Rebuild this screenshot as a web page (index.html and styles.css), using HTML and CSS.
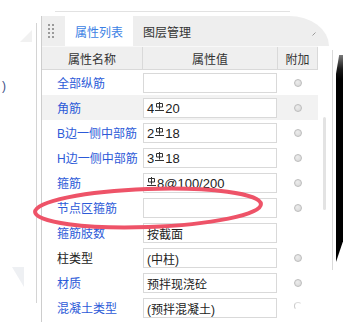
FILE: index.html
```html
<!DOCTYPE html>
<html lang="zh">
<head>
<meta charset="utf-8">
<title>属性列表</title>
<link rel="stylesheet" href="styles.css">
</head>
<body>
<div class="screen">
  <div class="gutter">
    <div class="gutter-art">
      <div class="tri tri-top"></div>
      <div class="paren">)</div>
      <div class="tri tri-bottom"></div>
    </div>
    <div class="gutter-rule"></div>
  </div>
  <div class="main">
    <div class="topline"></div>
    <div class="stage">
      <div class="panel">
        <div class="tabbar">
          <div class="grip"><i></i><i></i><i></i><i></i><i></i><i></i><i></i><i></i></div>
          <div class="tab active">属性列表</div>
          <div class="tab">图层管理</div>
          <svg class="handle" width="4" height="4" viewBox="0 0 4 4"><path d="M0.5 3.5L3.5 0.5" stroke="#9a9a9a" stroke-width="1"/></svg>
        </div>
        <div class="body">
          <div class="table">
            <div class="thead">
              <div class="th">属性名称</div>
              <div class="th">属性值</div>
              <div class="th">附加</div>
            </div>
            <div class="row">
              <div class="label">全部纵筋</div>
              <div class="val"></div>
              <div class="add"><span class="radio"></span></div>
            </div>
            <div class="row sel">
              <div class="label">角筋</div>
              <div class="val"><span class="num">4</span><svg class="rebar" width="9" height="9" viewBox="0 0 9 9"><path d="M4.5 0V7.5M1.5 1.5H7.5V5H1.5ZM0 8.5H9" stroke="#333" stroke-width="1" fill="none"/></svg><span class="num">20</span></div>
              <div class="add"><span class="radio"></span></div>
            </div>
            <div class="row">
              <div class="label">B边一侧中部筋</div>
              <div class="val"><span class="num">2</span><svg class="rebar" width="9" height="9" viewBox="0 0 9 9"><path d="M4.5 0V7.5M1.5 1.5H7.5V5H1.5ZM0 8.5H9" stroke="#333" stroke-width="1" fill="none"/></svg><span class="num">18</span></div>
              <div class="add"><span class="radio"></span></div>
            </div>
            <div class="row">
              <div class="label">H边一侧中部筋</div>
              <div class="val"><span class="num">3</span><svg class="rebar" width="9" height="9" viewBox="0 0 9 9"><path d="M4.5 0V7.5M1.5 1.5H7.5V5H1.5ZM0 8.5H9" stroke="#333" stroke-width="1" fill="none"/></svg><span class="num">18</span></div>
              <div class="add"><span class="radio"></span></div>
            </div>
            <div class="row">
              <div class="label">箍筋</div>
              <div class="val"><svg class="rebar first" width="9" height="9" viewBox="0 0 9 9"><path d="M4.5 0V7.5M1.5 1.5H7.5V5H1.5ZM0 8.5H9" stroke="#333" stroke-width="1" fill="none"/></svg><span class="num">8@100/200</span></div>
              <div class="add"><span class="radio"></span></div>
            </div>
            <div class="row">
              <div class="label">节点区箍筋</div>
              <div class="val"></div>
              <div class="add"><span class="radio"></span></div>
            </div>
            <div class="row">
              <div class="label">箍筋肢数</div>
              <div class="val">按截面</div>
              <div class="add"></div>
            </div>
            <div class="row">
              <div class="label plain">柱类型</div>
              <div class="val">(中柱)</div>
              <div class="add"><span class="radio"></span></div>
            </div>
            <div class="row">
              <div class="label">材质</div>
              <div class="val">预拌现浇砼</div>
              <div class="add"><span class="radio"></span></div>
            </div>
            <div class="row">
              <div class="label">混凝土类型</div>
              <div class="val">(预拌混凝土)</div>
              <div class="add"><span class="radio partial"></span></div>
            </div>
          </div>
          <div class="scroll">
            <div class="track"><div class="thumb"></div></div>
          </div>
        </div>
      </div>
      <div class="lens"></div>
    </div>
  </div>
  <svg class="mark" width="343" height="322" viewBox="0 0 343 322">
    <ellipse cx="148" cy="208" rx="113" ry="19" transform="rotate(-2 148 208)" fill="none" stroke="#ee5368" stroke-width="4"/>
  </svg>
</div>
</body>
</html>
```

FILE: styles.css
```css
* { box-sizing: border-box; }
html, body { margin: 0; padding: 0; }
body {
  width: 343px;
  height: 322px;
  overflow: hidden;
  background: #fff;
  font-family: "Liberation Sans", "Noto Sans CJK SC", sans-serif;
  font-size: 12px;
  color: #333;
}
.screen {
  position: relative;
  display: flex;
  width: 343px;
  height: 322px;
  overflow: hidden;
}

/* left gutter */
.gutter { display: flex; width: 37px; flex: none; }
.gutter-art { width: 36px; display: flex; flex-direction: column; }
.gutter-rule { width: 1px; height: 280px; margin-top: 23px; background: #d4d4d4; }
.tri { width: 0; height: 0; }
.tri-top {
  margin: 30px 0 0 20px;
  border-left: 12px solid transparent;
  border-bottom: 12px solid #f1f1f1;
}
.paren {
  margin: 38px 0 0 2px;
  height: 12px;
  line-height: 12px;
  color: #3d4f86;
  font-size: 12px;
}
.tri-bottom {
  margin: 175px 0 0 12px;
  border-left: 12px solid transparent;
  border-top: 20px solid #eef0f3;
}

/* main column */
.main {
  padding-left: 4px;
  display: flex;
  flex-direction: column;
  flex: none;
  width: 306px;
}
.topline { margin: 11px 0 0 14px; width: 235px; height: 1px; background: #e2e2e2; }
.stage { display: flex; margin-top: 4px; }

.panel {
  width: 292px;
  height: 306px;
  flex: none;
  border-left: 1px solid #cdcdcd;
  display: flex;
  flex-direction: column;
}

.tabbar {
  display: flex;
  align-items: stretch;
  height: 30px;
  background: #eeeeee;
  margin-right: 4px;
  border-top-right-radius: 40px 30px;
}
.grip {
  display: grid;
  grid-template-columns: 2px 2px;
  grid-auto-rows: 2px;
  column-gap: 2px;
  row-gap: 2px;
  align-content: center;
  margin-left: 6px;
}
.grip i { display: block; width: 2px; height: 2px; background: #9a9a9a; }
.tab {
  width: 68px;
  display: flex;
  align-items: center;
  justify-content: center;
  color: #333;
}
.tab.active { background: #fff; color: #3c7fe4; margin-left: 11px; }
.handle { margin: 16px 13px 0 auto; flex: none; }

/* table */
.body { display: flex; flex: 1; min-height: 0; }
.table { width: 276px; display: flex; flex-direction: column; flex: none; }
.thead {
  display: grid;
  grid-template-columns: 101px 135px 40px;
  height: 24px;
  flex: none;
  background: #efefef;
  border-top: 1px solid #f8f8f8;
  border-bottom: 1px solid #d9d9d9;
}
.th {
  display: flex;
  align-items: center;
  justify-content: center;
  border-right: 1px solid #d9d9d9;
  color: #333;
  padding-top: 1px;
}
.row {
  display: grid;
  grid-template-columns: 101px 135px 40px;
  height: 25px;
  flex: none;
}
.row.sel { background: #f2f2f2; }
.label {
  padding-left: 15px;
  display: flex;
  align-items: center;
  color: #2c5ad8;
  white-space: nowrap;
}
.label.plain { color: #222; }
.val {
  margin: 3px 1px 2px 0;
  border: 1px solid #d9d9d9;
  background: #fff;
  display: flex;
  align-items: center;
  padding-left: 3px;
  color: #222;
  white-space: nowrap;
  overflow: hidden;
}
.num { font-size: 13px; }
.rebar { flex: none; margin: 0 1px 4px 1px; }
.rebar.first { margin-left: 0; margin-right: 1px; }
.add { display: flex; align-items: center; justify-content: center; }
.radio {
  display: block;
  width: 8px;
  height: 8px;
  border-radius: 50%;
  border: 1px solid #bdbdbd;
  background: radial-gradient(circle at 40% 35%, #ececec, #d6d6d6);
}
.radio.partial {
  background: none;
  border-color: transparent;
  border-left-color: #c9c9c9;
  border-top-color: #dcdcdc;
  transform: translateY(-2px);
}

/* scroll area */
.scroll { width: 15px; flex: none; }
.track {
  margin-top: 4px;
  height: 220px;
  border-right: 1px solid #dadada;
  padding-top: 67px;
}
.thumb { margin-left: 5px; width: 3px; height: 93px; background: #e3e3e3; border-radius: 2px; }

/* magnifier edge */
.lens {
  width: 7px;
  height: 207px;
  flex: none;
  margin: 39px 0 0 3px;
  background: linear-gradient(#7a7a7a, #1a1a1a 14px, #000 24px);
  clip-path: polygon(45% 0, 100% 0, 100% 90%, 0 100%, 0 9%);
}

/* annotation */
.mark { position: absolute; left: 0; top: 0; pointer-events: none; }
```
